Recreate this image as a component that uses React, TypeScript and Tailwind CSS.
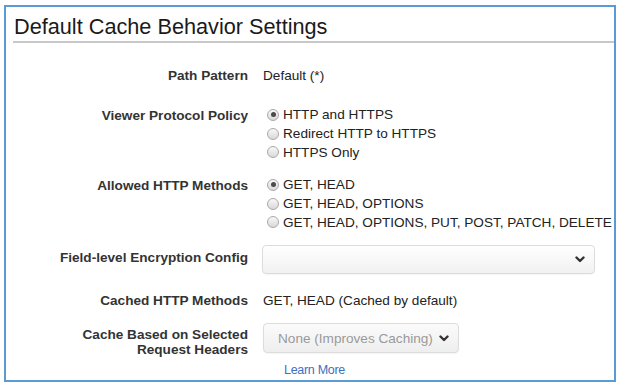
import React from "react";

const Radio = ({ checked }: { checked?: boolean }) => (
  <span className="relative inline-flex h-[12px] w-[12px] shrink-0 items-center justify-center rounded-full border border-[#a9a9a9] bg-gradient-to-b from-[#f8f8f8] to-[#d9d9d9]">
    {checked && <span className="h-[5px] w-[5px] rounded-full bg-[#4a4a4a]" />}
  </span>
);

const Chevron = () => (
  <svg width="10" height="7" viewBox="0 0 10 7" className="shrink-0">
    <polyline points="1.5,1.5 5,5 8.5,1.5" fill="none" stroke="#333" strokeWidth="2.4" strokeLinecap="round" strokeLinejoin="round" />
  </svg>
);

const RadioRow = ({ label, checked }: { label: string; checked?: boolean }) => (
  <div className="flex h-[18.7px] items-center gap-[4px] pl-[4px]">
    <Radio checked={checked} />
    <span>{label}</span>
  </div>
);

const Label = ({ children, className = "" }: { children: React.ReactNode; className?: string }) => (
  <div className={`w-[242px] shrink-0 text-right font-bold text-[#333] ${className}`}>{children}</div>
);

export default function App() {
  return (
    <div className="h-[391px] w-[628px] bg-white pl-[4px] pt-[5px]" style={{ fontFamily: '"Liberation Sans", Arial, sans-serif' }}>
      <div className="flex h-[377px] w-[612px] flex-col border-2 border-[#5b9bd5] text-[13.6px] leading-[19px] text-[#222]">
        <div className="flex h-[34px] items-center pl-[8px] pt-[4px] text-[21.7px] text-[#1a1a1a]">
          Default Cache Behavior Settings
        </div>
        <div className="ml-[7px] h-[1.5px] bg-[#c8c8c8]" />

        <div className="mt-[23.5px] flex gap-[15px]">
          <Label>Path Pattern</Label>
          <div>Default (*)</div>
        </div>

        <div className="mt-[20.5px] flex gap-[15px]">
          <Label>Viewer Protocol Policy</Label>
          <div className="flex flex-col">
            <RadioRow label="HTTP and HTTPS" checked />
            <RadioRow label="Redirect HTTP to HTTPS" />
            <RadioRow label="HTTPS Only" />
          </div>
        </div>

        <div className="mt-[14px] flex gap-[15px]">
          <Label>Allowed HTTP Methods</Label>
          <div className="flex flex-col whitespace-nowrap">
            <RadioRow label="GET, HEAD" checked />
            <RadioRow label="GET, HEAD, OPTIONS" />
            <RadioRow label="GET, HEAD, OPTIONS, PUT, POST, PATCH, DELETE" />
          </div>
        </div>

        <div className="mt-[13.5px] flex gap-[14px]">
          <Label className="pt-[2.5px]">Field-level Encryption Config</Label>
          <div className="flex h-[29px] w-[333px] items-center justify-end rounded-[4px] border border-[#dcdcdc] bg-gradient-to-b from-[#ffffff] to-[#f1f1f1] pr-[9px] shadow-[0_1px_1px_rgba(0,0,0,0.04)]">
            <Chevron />
          </div>
        </div>

        <div className="mt-[16.5px] flex gap-[15px]">
          <Label>Cached HTTP Methods</Label>
          <div>GET, HEAD (Cached by default)</div>
        </div>

        <div className="mt-[13.5px] flex gap-[15px]">
          <Label className="pt-[3.5px] leading-[15px]">
            Cache Based on Selected
            <br />
            Request Headers
          </Label>
          <div className="flex flex-col">
            <div className="flex h-[30px] w-[196px] items-center gap-[6px] rounded-[4px] border border-[#dcdcdc] bg-gradient-to-b from-[#fbfbfb] to-[#eeeeee] pl-[14px] text-[#9a9a9a] shadow-[0_1px_1px_rgba(0,0,0,0.04)]">
              <span>None (Improves Caching)</span>
              <Chevron />
            </div>
            <div className="mt-[7.5px] pl-[21px] text-[12.5px] tracking-[-0.3px] text-[#3d6fbd]">Learn More</div>
          </div>
        </div>
      </div>
    </div>
  );
}
